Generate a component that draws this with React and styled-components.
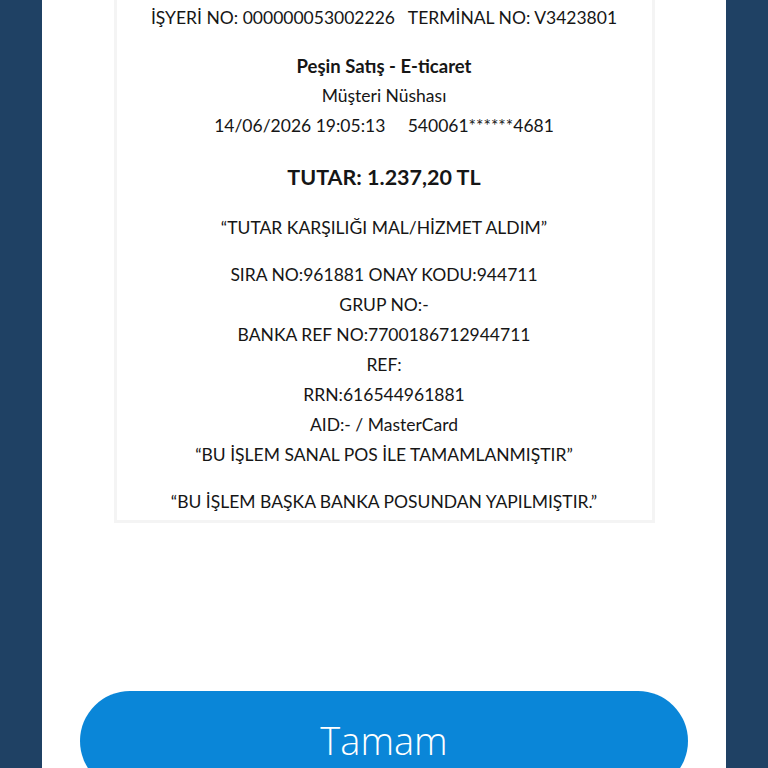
import React from "react";
import styled, { createGlobalStyle } from "styled-components";

const GlobalStyle = createGlobalStyle`
  html, body {
    margin: 0;
    padding: 0;
    height: 100%;
    overflow: hidden;
    background: #1f4164;
  }
  #root {
    height: 100%;
  }
`;

const Screen = styled.div`
  height: 100%;
  display: flex;
  justify-content: center;
  background: #1f4164;
`;

const Panel = styled.main`
  width: 684px;
  background: #ffffff;
  display: flex;
  flex-direction: column;
  align-items: center;
`;

const Receipt = styled.section`
  width: 535px;
  margin-top: -24px;
  padding: 24px 0 3px;
  border: 3px solid #f4f4f4;
  display: flex;
  flex-direction: column;
  align-items: center;
  font-family: "Lato", "Liberation Sans", sans-serif;
  color: #161616;
`;

const Line = styled.div`
  font-size: ${(p) => (p.$big ? "21.5px" : p.$bold ? "18.5px" : "17.5px")};
  font-weight: ${(p) => (p.$bold ? 700 : 400)};
  line-height: 30px;
  margin-top: ${(p) => p.$gap || 0}px;
  white-space: pre;
  text-align: center;
`;

const Button = styled.button`
  margin-top: 168px;
  width: 608px;
  height: 100px;
  flex-shrink: 0;
  border: none;
  border-radius: 50px;
  background: #0a86d8;
  color: #ffffff;
  font-family: "Open Sans", "Liberation Sans", sans-serif;
  font-weight: 300;
  font-size: 38px;
  padding: 0 0 2px;
  cursor: pointer;
`;

const lines = [
  { text: "İŞYERİ NO: 000000053002226   TERMİNAL NO: V3423801" },
  { text: "Peşin Satış - E-ticaret", bold: true, gap: 18 },
  { text: "Müşteri Nüshası" },
  { text: "14/06/2026 19:05:13     540061******4681" },
  { text: "TUTAR: 1.237,20 TL", bold: true, big: true, gap: 21 },
  { text: "“TUTAR KARŞILIĞI MAL/HİZMET ALDIM”", gap: 21 },
  { text: "SIRA NO:961881 ONAY KODU:944711", gap: 17 },
  { text: "GRUP NO:-" },
  { text: "BANKA REF NO:7700186712944711" },
  { text: "REF:" },
  { text: "RRN:616544961881" },
  { text: "AID:- / MasterCard" },
  { text: "“BU İŞLEM SANAL POS İLE TAMAMLANMIŞTIR”" },
  { text: "“BU İŞLEM BAŞKA BANKA POSUNDAN YAPILMIŞTIR.”", gap: 17 },
];

export default function App() {
  return (
    <>
      <GlobalStyle />
      <Screen>
        <Panel>
          <Receipt>
            {lines.map((l, i) => (
              <Line key={i} $bold={l.bold} $big={l.big} $gap={l.gap}>
                {l.text}
              </Line>
            ))}
          </Receipt>
          <Button>Tamam</Button>
        </Panel>
      </Screen>
    </>
  );
}
